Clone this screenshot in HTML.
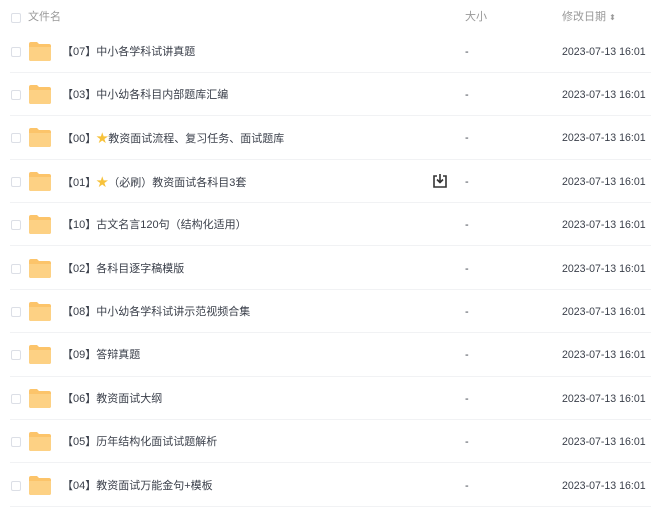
<!DOCTYPE html>
<html><head><meta charset="utf-8"><style>
body{margin:0;width:651px;height:500px;overflow:hidden;background:#fff;font-family:"Liberation Sans","Noto Sans CJK SC",sans-serif;font-size:11px;line-height:16px;color:#3a3f4a;}
.row{position:absolute;left:0;width:651px;height:43.4px;}
.row .line{position:absolute;left:10px;right:0;bottom:0;border-bottom:1px solid #f1f2f4;}
.cb{position:absolute;left:11px;width:8px;height:8px;border:1px solid #dcdfe6;border-radius:2px;}
.fold{position:absolute;left:29px;width:22px;height:20px;}
.name,.size,.date{position:absolute;white-space:nowrap;}
.name{left:62px;}
.size{left:465px;}
.date{left:562px;font-size:10.6px;}
.hd{color:#999;}
.star{color:#f7c23b;font-size:12px;}
</style></head><body>
<div class="row" style="top:0">
 <div class="cb" style="top:13px"></div>
 <div class="name hd" style="left:28px;top:9px">文件名</div>
 <div class="size hd" style="top:9px">大小</div>
 <div class="date hd" style="top:9px;font-size:11px">修改日期 <span style="font-size:8px">⬍</span></div>
</div>
<div id="rows"></div>
<script>
var n=["【07】中小各学科试讲真题","【03】中小幼各科目内部题库汇编","【00】<span class=star>★</span>教资面试流程、复习任务、面试题库","【01】<span class=star>★</span>（必刷）教资面试各科目3套","【10】古文名言120句（结构化适用）","【02】各科目逐字稿模版","【08】中小幼各学科试讲示范视频合集","【09】答辩真题","【06】教资面试大纲","【05】历年结构化面试试题解析","【04】教资面试万能金句+模板"];
var h="";
for(var i=0;i<n.length;i++){var t=29.5+i*43.4;
h+='<div class="row" style="top:'+t+'px"><div class="cb" style="top:17px"></div>'+
'<svg class="fold" style="top:11px" viewBox="0 0 22 20"><path d="M2 1h6l2 2h10a2 2 0 0 1 2 2v13a2 2 0 0 1-2 2H2a2 2 0 0 1-2-2V3a2 2 0 0 1 2-2z" fill="#fcc46a"/><path d="M0 6h22v12a2 2 0 0 1-2 2H2a2 2 0 0 1-2-2z" fill="#fdd184"/></svg>'+
'<div class="name" style="top:14px">'+n[i]+'</div><div class="size" style="top:14px">-</div><div class="date" style="top:14px">2023-07-13 16:01</div>'+
(i==3?'<svg style="position:absolute;left:432px;top:13px" width="16" height="16" viewBox="0 0 16 16" fill="none" stroke="#333" stroke-width="1.6"><path d="M5 3H2v11h12V3h-3"/><path d="M8 1v8M5 6.5l3 3 3-3"/></svg>':'')+
'<div class="line"></div></div>';}
document.getElementById("rows").innerHTML=h;
</script>
</body></html>
